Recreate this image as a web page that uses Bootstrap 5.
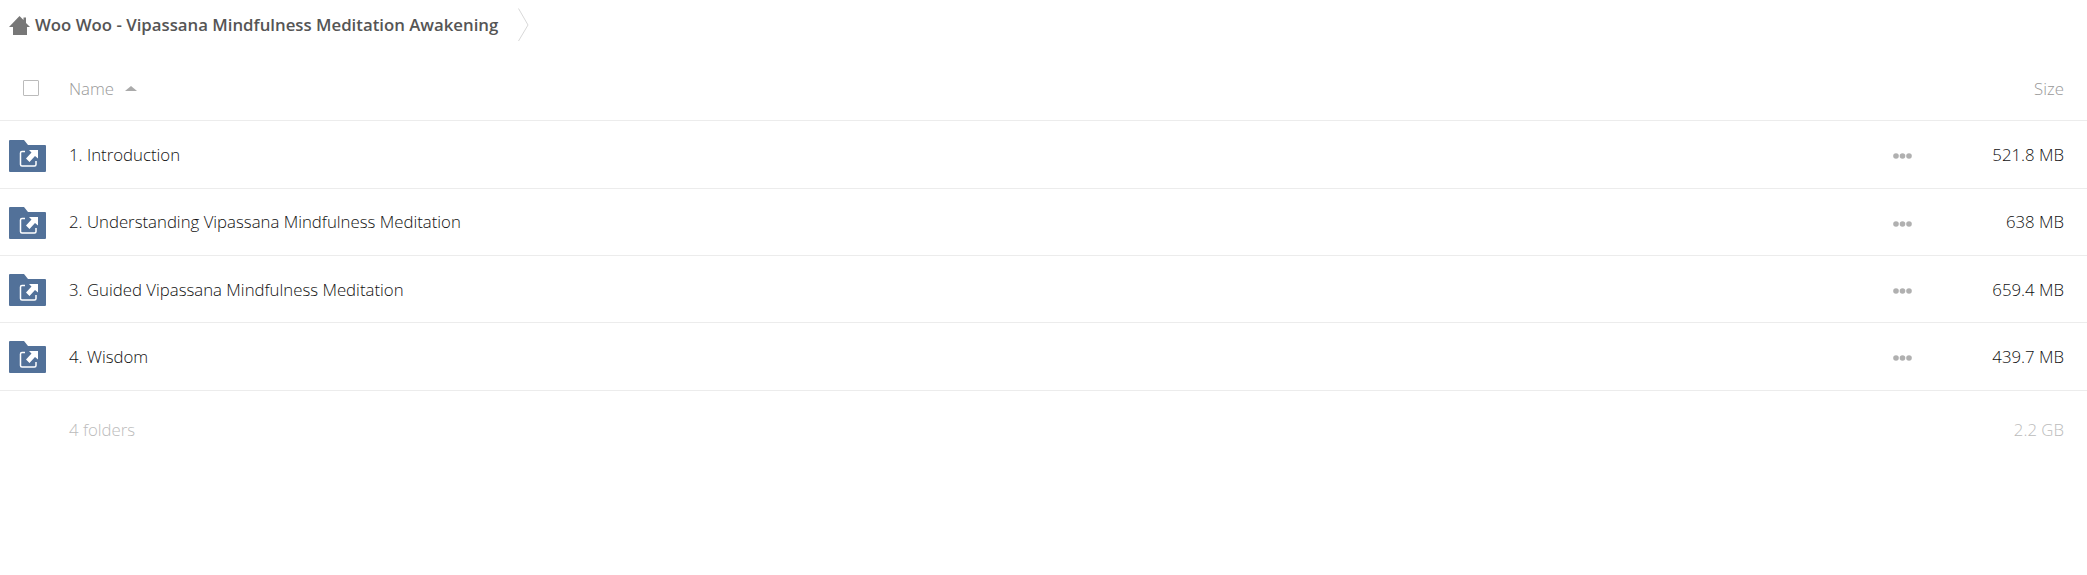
<!DOCTYPE html>
<html lang="en">
<head>
    <meta charset="utf-8">
    <title>Woo Woo - Vipassana Mindfulness Meditation Awakening</title>
    <link rel="stylesheet" href="https://cdn.jsdelivr.net/npm/bootstrap@5.3.2/dist/css/bootstrap.min.css">
    <style>
        body {
            background-color: #fff;
            font-family: "Open Sans", sans-serif;
            font-size: 16.8px;
            color: #333;
        }
        .crumb-bar {
            height: 50px;
            padding-left: 9px;
        }
        .crumb-title {
            font-weight: 600;
            color: #555;
            margin-left: 5px;
            margin-right: 20px;
        }
        .file-head {
            height: 71.4px;
            border-bottom: 1px solid #ececec;
            color: #999;
            font-weight: 300;
            padding-top: 6px;
        }
        .file-row {
            height: 67.3px;
            border-bottom: 1px solid #ececec;
            font-weight: 300;
            color: #111;
        }
        .cell-icon {
            width: 69px;
            padding-left: 9px;
        }
        .file-row .cell-icon {
            padding-top: 2px;
        }
        .tick-box {
            display: block;
            width: 16px;
            height: 16px;
            margin-left: 14px;
            border: 1px solid #bbb;
            border-radius: 1px;
        }
        .sort-arrow {
            width: 0;
            height: 0;
            margin-left: 11px;
            border-left: 6px solid transparent;
            border-right: 6px solid transparent;
            border-bottom: 5px solid #aaa;
        }
        .cell-more {
            width: 90px;
            padding-left: 1px;
        }
        .cell-size {
            width: 105px;
            padding-right: 23px;
            text-align: right;
            white-space: nowrap;
        }
        .file-foot {
            height: 78px;
            color: #bbb;
            font-weight: 300;
        }
    </style>
</head>
<body>
<div class="crumb-bar d-flex align-items-center">
    <svg class="flex-shrink-0" width="21" height="19" viewBox="0 0 21 19"><path d="M0 11 10.500 0 14.500 4V1.500H17V7L21 11H18V19H4V11Z" fill="#777"/></svg>
    <span class="crumb-title">Woo Woo - Vipassana Mindfulness Meditation Awakening</span>
    <svg width="11" height="34" viewBox="0 0 11 34"><path d="M0.500 0.500 10 17 0.500 33" fill="none" stroke="#d8d8d8"/></svg>
</div>

<div class="file-head d-flex align-items-center">
    <div class="cell-icon"><span class="tick-box"></span></div>
    <div class="flex-grow-1 d-flex align-items-center">Name <span class="sort-arrow"></span></div>
    <div class="cell-size">Size</div>
</div>

<div class="file-row d-flex align-items-center">
    <div class="cell-icon"><svg class="d-block" width="37" height="32" viewBox="0 0 37 32"><use href="#shared-folder"/></svg></div>
    <div class="flex-grow-1">1. Introduction</div>
    <div class="cell-more"><svg width="19" height="6" viewBox="0 0 19 6"><use href="#more-dots"/></svg></div>
    <div class="cell-size">521.8 MB</div>
</div>
<div class="file-row d-flex align-items-center">
    <div class="cell-icon"><svg class="d-block" width="37" height="32" viewBox="0 0 37 32"><use href="#shared-folder"/></svg></div>
    <div class="flex-grow-1">2. Understanding Vipassana Mindfulness Meditation</div>
    <div class="cell-more"><svg width="19" height="6" viewBox="0 0 19 6"><use href="#more-dots"/></svg></div>
    <div class="cell-size">638 MB</div>
</div>
<div class="file-row d-flex align-items-center">
    <div class="cell-icon"><svg class="d-block" width="37" height="32" viewBox="0 0 37 32"><use href="#shared-folder"/></svg></div>
    <div class="flex-grow-1">3. Guided Vipassana Mindfulness Meditation</div>
    <div class="cell-more"><svg width="19" height="6" viewBox="0 0 19 6"><use href="#more-dots"/></svg></div>
    <div class="cell-size">659.4 MB</div>
</div>
<div class="file-row d-flex align-items-center">
    <div class="cell-icon"><svg class="d-block" width="37" height="32" viewBox="0 0 37 32"><use href="#shared-folder"/></svg></div>
    <div class="flex-grow-1">4. Wisdom</div>
    <div class="cell-more"><svg width="19" height="6" viewBox="0 0 19 6"><use href="#more-dots"/></svg></div>
    <div class="cell-size">439.7 MB</div>
</div>

<div class="file-foot d-flex align-items-center">
    <div class="cell-icon"></div>
    <div class="flex-grow-1">4 folders</div>
    <div class="cell-size">2.2 GB</div>
</div>

<svg width="0" height="0" class="d-block">
    <defs>
        <g id="shared-folder">
            <path d="M0 1A1 1 0 0 1 1 0H15L19 5H36A1 1 0 0 1 37 6V31A1 1 0 0 1 36 32H1A1 1 0 0 1 0 31Z" fill="#527199"/>
            <path d="M16 11.500H13A1.500 1.500 0 0 0 11.500 13V24.500A1.500 1.500 0 0 0 13 26H25.500A1.500 1.500 0 0 0 27 24.500V21" fill="none" stroke="#fff" stroke-width="1.500"/>
            <path d="M20 10H29V18.500L26 16 20.500 22 17 18.500 22.500 12.500Z" fill="#fff"/>
        </g>
        <g id="more-dots" fill="#b0b0b0">
            <circle cx="3" cy="3" r="2.800"/>
            <circle cx="9.500" cy="3" r="2.800"/>
            <circle cx="16" cy="3" r="2.800"/>
        </g>
    </defs>
</svg>
<script src="https://cdn.jsdelivr.net/npm/bootstrap@5.3.2/dist/js/bootstrap.bundle.min.js"></script>
</body>
</html>
